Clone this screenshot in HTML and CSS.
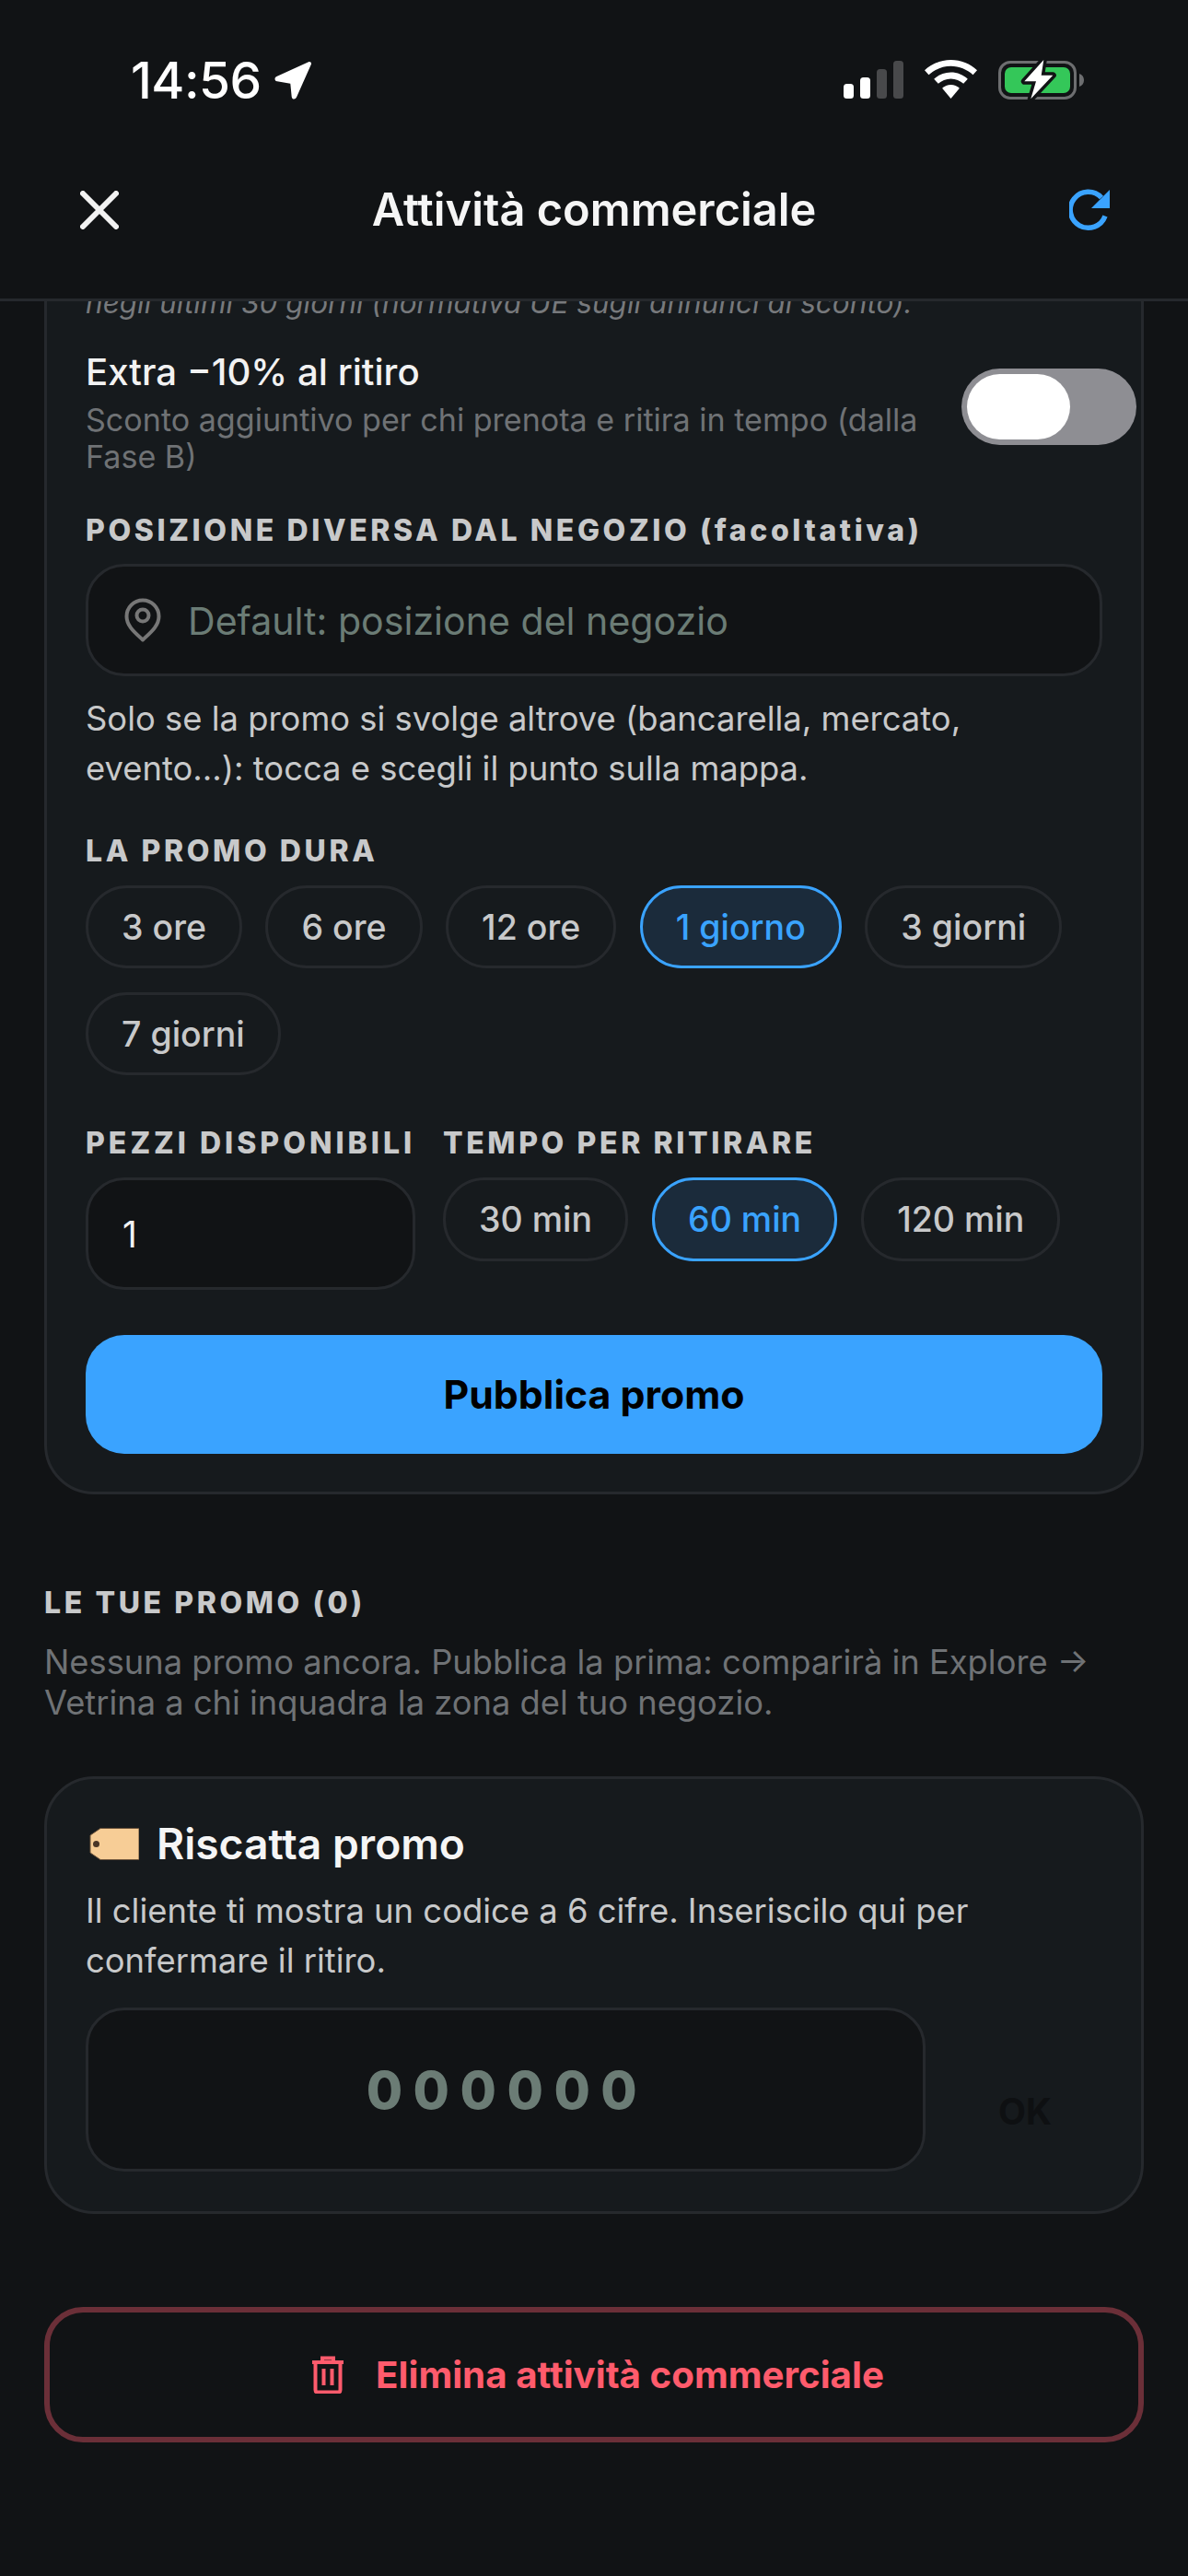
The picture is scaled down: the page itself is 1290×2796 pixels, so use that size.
FILE: index.html
```html
<!DOCTYPE html>
<html lang="it">
<head>
<meta charset="utf-8">
<title>Attività commerciale</title>
<link rel="stylesheet" href="styles.css">
</head>
<body>
<div class="screen">
  <header class="topbar">
    <div class="status">
      <div class="status-left">
        <span class="clock">14:56</span>
        <svg class="loc" viewBox="0 0 41 42"><path d="M37 1.200c2-.8 3.600 1 2.800 2.900L24 39.500c-1.300 2.900-5 2.500-5.300-.6l-1.400-14.200L2.900 22.300c-2.900-.5-3.300-4-.5-5.200z" fill="#fff"/></svg>
      </div>
      <div class="status-right">
        <svg class="signal" viewBox="0 0 65 41"><rect x="0" y="25" width="11" height="16" rx="3.500" fill="#fff"/><rect x="18" y="18" width="11" height="23" rx="3.500" fill="#fff"/><rect x="36" y="9" width="11" height="32" rx="3.500" fill="#48494b"/><rect x="54" y="0" width="11" height="41" rx="3.500" fill="#48494b"/></svg>
        <svg class="wifi" viewBox="0 0 57 42"><path d="M28.500 0C39.500 0 49.500 4.300 57 11.200l-4.500 5C46 10.400 37.600 6.800 28.500 6.800S11 10.400 4.500 16.200L0 11.200C7.500 4.300 17.500 0 28.500 0z" fill="#fff"/><path d="M28.500 13.500c7 0 13.500 2.700 18.300 7.200l-4.600 5.100c-3.600-3.300-8.400-5.400-13.700-5.400s-10.100 2.100-13.700 5.400l-4.600-5.100c4.800-4.500 11.300-7.200 18.300-7.200z" fill="#fff"/><path d="M28.500 27c3.600 0 6.900 1.400 9.400 3.700L28.500 42l-9.400-11.300c2.500-2.300 5.800-3.700 9.400-3.700z" fill="#fff"/></svg>
        <svg class="battery" viewBox="0 0 94 46"><rect x="1.500" y="3.500" width="82" height="39" rx="11.500" fill="none" stroke="#6d6e70" stroke-width="3"/><rect x="7" y="9" width="71" height="28" rx="7" fill="#34c759"/><path d="M88 16c3 1 5 3.500 5 7s-2 6-5 7z" fill="#6d6e70"/><path d="M49.300 1 28.300 24.300H41L35.300 43.300 59.300 17.700H46.700z" fill="#fff" stroke="#111315" stroke-width="7" stroke-linejoin="round" paint-order="stroke"/></svg>
      </div>
    </div>
    <nav class="nav">
      <svg class="nav-close" viewBox="0 0 42 42"><path d="M3 3l36 36M39 3 3 39" fill="none" stroke="#f2f2f2" stroke-width="6" stroke-linecap="round"/></svg>
      <h1 class="nav-title">Attività commerciale</h1>
      <svg class="nav-refresh" viewBox="0 0 46 46"><path d="M39 29.500A19.500 19.500 0 1 1 35 9.500" fill="none" stroke="#3aa3ff" stroke-width="5.500"/><path d="M44 1v20H24z" fill="#3aa3ff"/></svg>
    </nav>
  </header>

  <main class="content">
    <section class="card card-clipped">
      <p class="note-italic">negli ultimi 30 giorni (normativa UE sugli annunci di sconto).</p>
      <div class="toggle-row">
        <div class="toggle-text">
          <div class="toggle-title">Extra −10% al ritiro</div>
          <div class="toggle-sub">Sconto aggiuntivo per chi prenota e ritira in tempo (dalla Fase B)</div>
        </div>
        <div class="toggle"><span class="toggle-thumb"></span></div>
      </div>

      <div class="label label-pos">POSIZIONE DIVERSA DAL NEGOZIO (facoltativa)</div>
      <div class="field field-place">
        <svg class="pin" viewBox="0 0 40 48"><path d="M20 2.500C10.300 2.500 2.500 10.300 2.500 20c0 10.500 9 17.500 17.500 25.500C28.500 37.500 37.500 30.500 37.500 20 37.500 10.300 29.700 2.500 20 2.500z" fill="none" stroke="#777" stroke-width="4" stroke-linejoin="round"/><circle cx="20" cy="19" r="6.500" fill="none" stroke="#777" stroke-width="4"/></svg>
        <span class="placeholder">Default: posizione del negozio</span>
      </div>
      <p class="help help-place">Solo se la promo si svolge altrove (bancarella, mercato, evento...): tocca e scegli il punto sulla mappa.</p>

      <div class="label label-dur">LA PROMO DURA</div>
      <div class="chips chips-wrap">
        <span class="chip">3 ore</span>
        <span class="chip">6 ore</span>
        <span class="chip">12 ore</span>
        <span class="chip chip-on">1 giorno</span>
        <span class="chip">3 giorni</span>
        <span class="chip">7 giorni</span>
      </div>

      <div class="split">
        <div class="split-qty">
          <div class="label label-qty">PEZZI DISPONIBILI</div>
          <div class="field field-qty">1</div>
        </div>
        <div class="split-time">
          <div class="label">TEMPO PER RITIRARE</div>
          <div class="chips">
            <span class="chip">30 min</span>
            <span class="chip chip-on">60 min</span>
            <span class="chip">120 min</span>
          </div>
        </div>
      </div>

      <div class="primary">Pubblica promo</div>
    </section>

    <div class="label label-section">LE TUE PROMO (0)</div>
    <p class="empty">Nessuna promo ancora. Pubblica la prima: comparirà in Explore → Vetrina a chi inquadra la zona del tuo negozio.</p>

    <section class="card card-redeem">
      <div class="redeem-head">
        <svg class="tag" viewBox="0 0 54 35"><path d="M12 .5h42v34H12L1 27V8z" fill="#f7cd96" stroke="#6b533a" stroke-width="1" stroke-linejoin="round"/><circle cx="7.500" cy="17.500" r="3.500" fill="#4a3526"/></svg>
        <h2 class="redeem-title">Riscatta promo</h2>
      </div>
      <p class="help redeem-help">Il cliente ti mostra un codice a 6 cifre. Inseriscilo qui per confermare il ritiro.</p>
      <div class="redeem-row">
        <div class="field field-code">000000</div>
        <span class="ok">OK</span>
      </div>
    </section>

    <div class="danger">
      <svg class="trash" viewBox="0 0 36 41"><path d="M1 7h34M12 6V2.500h12V6" fill="none" stroke="#ff5b6c" stroke-width="4"/><path d="M4.500 7v30c0 1.500 1 2.500 2.500 2.500h22c1.500 0 2.500-1 2.500-2.500V7" fill="none" stroke="#ff5b6c" stroke-width="4"/><path d="M13.500 14v18M22.500 14v18" fill="none" stroke="#ff5b6c" stroke-width="4"/></svg>
      <span>Elimina attività commerciale</span>
    </div>
  </main>
</div>
</body>
</html>
```
FILE: styles.css
```css
* { box-sizing: border-box; }
html, body { margin: 0; padding: 0; background: #111315; }
body { font-family: Inter, "Noto Sans", sans-serif; color: #fff; }
h1, h2, p { margin: 0; font: inherit; }

.screen { width: 1290px; height: 2796px; overflow: hidden; display: flex; flex-direction: column; }

.topbar { height: 327px; flex: none; background: #111315; border-bottom: 3px solid #26292d; }
.status { height: 153px; padding: 64px 112px 0 142px; display: flex; justify-content: space-between; align-items: flex-start; }
.status-left { display: flex; align-items: center; gap: 14px; }
.clock { font-size: 55px; line-height: 46px; font-weight: 500; letter-spacing: -0.5px; color: #fff; }
.loc { width: 41px; height: 42px; }
.status-right { display: flex; align-items: flex-start; }
.signal { width: 65px; height: 41px; margin: 2px 23px 0 0; }
.wifi { width: 57px; height: 42px; margin: 1px 23px 0 0; }
.battery { width: 94px; height: 46px; margin-top: 0; }

.nav { height: 150px; padding: 0 83px 0 87px; display: flex; align-items: center; justify-content: space-between; }
.nav-close { width: 42px; height: 42px; }
.nav-title { font-size: 48.750px; line-height: 60px; font-weight: 600; color: #f5f5f5; }
.nav-refresh { width: 46px; height: 46px; }

.content { flex: 1; min-height: 0; padding: 0 48px; overflow: hidden; }

.card { background: #161a1d; border: 3px solid #26292d; border-radius: 54px; padding: 0 42px; }
.card-clipped { margin-top: -78px; padding-top: 57px; padding-bottom: 41px; }
.note-italic { font-size: 31.500px; line-height: 40px; font-style: italic; color: #77797c; }

.toggle-row { margin-top: 31px; display: flex; justify-content: space-between; align-items: flex-start; margin-right: -37px; }
.toggle-text { width: 930px; }
.toggle-title { font-size: 40.200px; line-height: 48px; font-weight: 500; color: #f2f2f2; }
.toggle-sub { margin-top: 8px; font-size: 34.100px; line-height: 40px; color: #6f7275; }
.toggle { width: 190px; height: 83px; margin-top: 20px; padding: 6px; background: #8e8e93; border-radius: 42px; }
.toggle-thumb { display: block; width: 112px; height: 71px; background: #fff; border-radius: 36px; }

.label { font-size: 32px; line-height: 36px; font-weight: 800; letter-spacing: 3.600px; color: #c8c9ca; white-space: nowrap; }
.label-pos { margin-top: 42px; }
.label-dur { margin-top: 45px; }
.label-qty { letter-spacing: 4px; }
.label-section { margin-top: 100px; }

.field { background: #111315; border: 3px solid #26292d; border-radius: 42px; }
.field-place { margin-top: 18px; height: 122px; padding: 0 39px; display: flex; align-items: center; gap: 29px; }
.pin { width: 40px; height: 48px; flex: none; }
.placeholder { padding-top: 2px; font-size: 41.100px; color: #6b7c75; }

.help { font-size: 36.400px; line-height: 54px; color: #c8c9ca; }
.help-place { margin-top: 19px; }

.chips { display: flex; gap: 26px; }
.chips-wrap { margin-top: 19px; flex-wrap: wrap; column-gap: 25.500px; }
.chip { height: 90px; padding: 0 36px; display: flex; align-items: center; background: #161a1d; border: 3px solid #26292d; border-radius: 45px; font-size: 37.500px; font-weight: 500; color: #c8c9ca; white-space: nowrap; }
.chip-on { background: #1b2b3b; border-color: #3aa3ff; color: #3aa3ff; }

.split { margin-top: 56px; display: flex; gap: 30px; }
.split-qty { width: 358px; flex: none; }
.split-time { flex: 1; min-width: 0; }
.split .chips { margin-top: 19px; }
.split .chip { height: 91px; }
.field-qty { margin-top: 19px; height: 122px; padding: 0 37px; display: flex; align-items: center; font-size: 39px; color: #f2f2f2; }

.primary { margin-top: 49px; height: 129px; display: flex; align-items: center; justify-content: center; background: #3aa3ff; border-radius: 42px; font-size: 42.800px; font-weight: 700; color: #000; }

.empty { margin-top: 24px; font-size: 36.300px; line-height: 44px; color: #6f7275; }

.card-redeem { margin-top: 58px; padding-top: 43px; padding-bottom: 43px; }
.redeem-head { display: flex; align-items: center; gap: 19px; padding-left: 4px; }
.tag { width: 54px; height: 35px; flex: none; }
.redeem-title { font-size: 46.200px; line-height: 54px; font-weight: 600; color: #f5f5f5; }
.redeem-help { margin-top: 19px; }
.redeem-row { margin-top: 24px; display: flex; align-items: flex-end; }
.field-code { width: 912px; height: 178px; flex: none; padding-left: 3px; display: flex; align-items: center; justify-content: center; font-size: 57px; font-weight: 800; letter-spacing: 11.500px; color: #6b7c75; }
.ok { margin: 0 0 41px 79px; font-size: 39px; line-height: 48px; font-weight: 700; color: #0e1012; }

.danger { margin-top: 101px; height: 147px; padding-left: 8px; display: flex; align-items: center; justify-content: center; gap: 34px; border: 6px solid #6b2f38; border-radius: 42px; font-size: 40.300px; font-weight: 700; color: #ff5b6c; }
.trash { width: 36px; height: 41px; flex: none; }
```
